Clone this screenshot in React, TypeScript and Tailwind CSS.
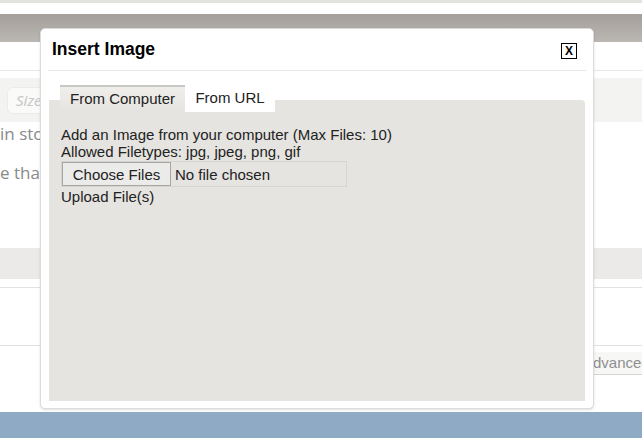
import React from "react";

const arial = { fontFamily: '"Liberation Sans", Arial, sans-serif' };

function PageBehind() {
  return (
    <div className="flex h-[438px] flex-col bg-white">
      <div className="h-[3px] bg-[#e4e3df]" />
      <div className="h-[11px] bg-white" />
      <div className="h-[28px] bg-gradient-to-b from-[#a49f9a] to-[#bbb7b3]" />
      <div className="h-[29px] border-b border-[#e6e6e6]" />
      <div className="h-[7px]" />
      <div className="flex h-[44px] items-center bg-[#f3f3f1] px-[7px]">
        <div className="flex h-[27px] w-[120px] items-center rounded-md border border-[#ececea] bg-[#fafaf9] pl-[8px] text-[15px] italic text-[#c8c8c8]">
          Size
        </div>
      </div>
      {/* rest of these lines sits under the dialog */}
      <div
        className="flex w-[40px] flex-col overflow-hidden whitespace-nowrap text-[17px] text-[#8a8a8a]"
        style={{ fontFamily: '"Open Sans", sans-serif' }}
      >
        <p className="mt-[1px] h-[22px] leading-[22px]">in store</p>
        <p className="mt-[17px] h-[22px] leading-[22px]">e that</p>
      </div>
      <div className="h-[64px]" />
      <div className="h-[31px] bg-[#ebeae8]" />
      <div className="h-[9px] border-b border-[#e2e2e2]" />
      <div className="h-[58px] border-b border-[#e2e2e2]" />
      <div className="mt-[6px] flex h-[23px] items-center">
        <div
          className="ml-[581px] flex h-[23px] items-center whitespace-nowrap border-b border-[#d4d4d4] bg-[#f7f7f6] pl-[2px] text-[15px] text-[#8f8f8f]"
          style={arial}
        >
          Advanced
        </div>
      </div>
      <div className="flex-1" />
      <div className="h-[26px] bg-[#8eaac5]" />
    </div>
  );
}

function InsertImageDialog() {
  return (
    <div
      className="absolute left-[40px] top-[28px] flex h-[381px] w-[554px] flex-col rounded-[5px] border border-[#dcdcdc] bg-white shadow-sm"
      style={arial}
    >
      <div className="mx-[7px] flex h-[42px] shrink-0 items-center justify-between border-b border-[#e6e6e6] pl-[4px] pr-[9px]">
        <h2 className="text-[17.5px] font-bold text-black">Insert Image</h2>
        <button className="mt-[2px] flex h-[16px] w-[16px] items-center justify-center border border-black bg-white text-[12px] font-bold leading-none text-black">
          X
        </button>
      </div>
      <div className="flex flex-1 flex-col px-[8px] pb-[7px] pt-[14px]">
        <div className="relative z-10 flex h-[27px] pl-[11px] text-[15px] text-[#222]">
          <div className="flex w-[125px] items-center justify-center border-t-2 border-[#c9c7c3] bg-gradient-to-b from-[#efeeeb] to-[#e5e4e0]">
            From Computer
          </div>
          <div className="flex w-[90px] items-center justify-center bg-white">
            From URL
          </div>
        </div>
        <div className="-mt-[12px] flex flex-1 flex-col rounded-tr-[4px] bg-[#e5e4e0] px-[12px] pt-[26px] text-[15px] leading-[17px] text-[#222]">
          <p>Add an Image from your computer (Max Files: 10)</p>
          <p>Allowed Filetypes: jpg, jpeg, png, gif</p>
          <div className="mt-[1px] flex h-[26px] w-[286px] items-center border border-[#d6d5d1]">
            <div className="flex h-[24px] w-[109px] items-center justify-center border border-[#a6a6a6] bg-[#ebebea] text-[15px] text-[#222]">
              Choose Files
            </div>
            <span className="ml-[4px] text-[15px] text-[#222]">No file chosen</span>
          </div>
          <p className="mt-[1px]">Upload File(s)</p>
        </div>
      </div>
    </div>
  );
}

export default function App() {
  return (
    <div className="relative h-[438px] w-[642px] overflow-hidden">
      <PageBehind />
      <InsertImageDialog />
    </div>
  );
}
